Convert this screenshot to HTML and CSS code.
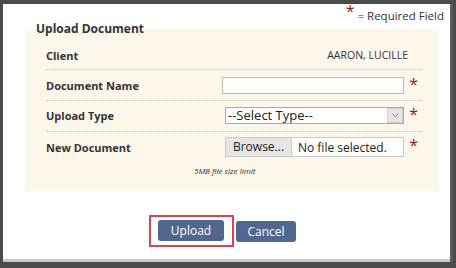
FILE: index.html
```html
<!DOCTYPE html>
<html lang="en">
<head>
    <meta charset="UTF-8">
    <meta name="viewport" content="width=device-width, initial-scale=1.0">
    <title>Upload Document</title>
    <link rel="stylesheet" href="styles.css">
</head>
<body>
    <div class="dialog">
        <div class="required-note"><span class="star big">*</span> = Required Field</div>

        <fieldset class="upload-panel">
            <legend>Upload Document</legend>

            <div class="row">
                <span class="label">Client</span>
                <span class="client-name">AARON, LUCILLE</span>
                <span class="star"></span>
            </div>
            <div class="row">
                <label class="label" for="docName">Document Name</label>
                <input type="text" id="docName" class="text-box">
                <span class="star">*</span>
            </div>
            <div class="row">
                <label class="label" for="uploadType">Upload Type</label>
                <div class="select-wrap">
                    <select id="uploadType" class="select-box">
                        <option>--Select Type--</option>
                    </select>
                    <span class="select-arrow">
                        <svg width="7" height="4" viewBox="0 0 7 4"><path d="M0.5 0.5 L3.5 3.5 L6.5 0.5" fill="none" stroke="#888" stroke-width="1"/></svg>
                    </span>
                </div>
                <span class="star">*</span>
            </div>
            <div class="row last">
                <span class="label">New Document</span>
                <label class="file-box">
                    <span class="browse">Browse...</span>
                    <span class="file-name">No file selected.</span>
                    <input type="file" class="file-hidden">
                </label>
                <span class="star">*</span>
            </div>
            <p class="size-limit">5MB file size limit</p>
        </fieldset>

        <div class="actions">
            <span class="highlight">
                <button type="submit" class="btn">Upload</button>
            </span>
            <button type="button" class="btn cancel">Cancel</button>
        </div>
    </div>
</body>
</html>
```

FILE: styles.css
```css
body {
    margin: 0;
    height: 268px;
    background: #4b4b4b;
    font-family: "Open Sans", "Liberation Sans", sans-serif;
    color: #333;
    padding: 4px 0 0 3px;
    box-sizing: border-box;
}

.dialog {
    width: 447px;
    height: 255px;
    background: #fff;
    border-bottom: 3px solid #c9cbca;
    box-shadow: 3px 0 0 #5c5c5c;
}

.required-note {
    text-align: right;
    font-size: 11.5px;
    padding: 2px 6px 0 0;
    height: 16px;
    line-height: 16px;
}

.star {
    color: #8c1c1c;
    font-size: 16px;
    font-weight: normal;
    width: 14px;
    text-align: right;
    line-height: 1;
    align-self: flex-start;
    margin-top: 0;
}

.star.big {
    font-size: 16px;
    position: relative;
    top: -3px;
}

.upload-panel {
    margin: -1px 21px 0 22px;
    padding: 0 17px 0 21px;
    border: none;
    background: #fdf6ea;
}

.upload-panel legend {
    padding: 0;
    margin-left: -10px;
    font-size: 12px;
    font-weight: bold;
    line-height: 16px;
}

.row {
    display: flex;
    align-items: center;
    border-bottom: 1px dotted #c8c3ba;
    padding: 6px 0 6px;
    height: 18px;
}

legend + .row {
    padding-top: 9px;
    padding-bottom: 5px;
}

.row:nth-of-type(3) {
    padding-top: 5px;
    padding-bottom: 7px;
}

.row.last {
    border-bottom: none;
    padding-top: 5px;
    height: 20px;
}

.label {
    width: 176px;
    font-size: 11px;
    font-weight: bold;
}

.client-name {
    width: 186px;
    text-align: right;
    font-size: 10.5px;
}

.text-box {
    width: 182px;
    height: 17px;
    box-sizing: border-box;
    border: 1px solid #b9b9b9;
    margin: 0;
    padding: 0 3px;
}

.select-wrap {
    position: relative;
    margin-left: 3px;
    width: 179px;
    height: 17px;
}

.select-box {
    appearance: none;
    display: block;
    width: 100%;
    height: 17px;
    box-sizing: border-box;
    border: 1px solid #a9a9a9;
    border-radius: 0;
    background: #fff;
    padding: 0 2px;
    margin: 0;
    font-family: "Open Sans", sans-serif;
    font-size: 13px;
    line-height: 15px;
    color: #222;
}

.select-arrow {
    position: absolute;
    top: 1px;
    right: 1px;
    width: 14px;
    height: 13px;
    border: 1px solid #cfcfcf;
    background: #e6e6e6;
    display: flex;
    align-items: center;
    justify-content: center;
}

.file-box {
    display: flex;
    align-items: center;
    margin-left: 3px;
    width: 179px;
    height: 20px;
    box-sizing: border-box;
    border: 1px solid #c9c9c9;
    background: #fff;
    font-size: 12px;
    color: #222;
}

.browse {
    height: 18px;
    line-height: 17px;
    width: 66px;
    box-sizing: border-box;
    border-right: 1px solid #c9c9c9;
    background: #e6e6e6;
    text-align: center;
}

.file-name {
    padding-left: 6px;
}

.file-hidden {
    display: none;
}

.size-limit {
    margin: 0;
    padding: 2px 0 14px 148px;
    font-size: 8px;
    font-style: italic;
    line-height: 12px;
}

.actions {
    display: flex;
    align-items: center;
    padding: 24px 0 0 146px;
}

.highlight {
    display: inline-block;
    border: 2px solid #e0424d;
    padding: 3px 8px 4px 7px;
    line-height: 0;
}

.btn {
    height: 21px;
    width: 66px;
    padding: 0;
    border: none;
    border-radius: 3px;
    background: #526690;
    color: #fff;
    font-family: "Open Sans", sans-serif;
    font-size: 12px;
    cursor: pointer;
}

.btn.cancel {
    width: 60px;
    margin-left: 2px;
}
```
